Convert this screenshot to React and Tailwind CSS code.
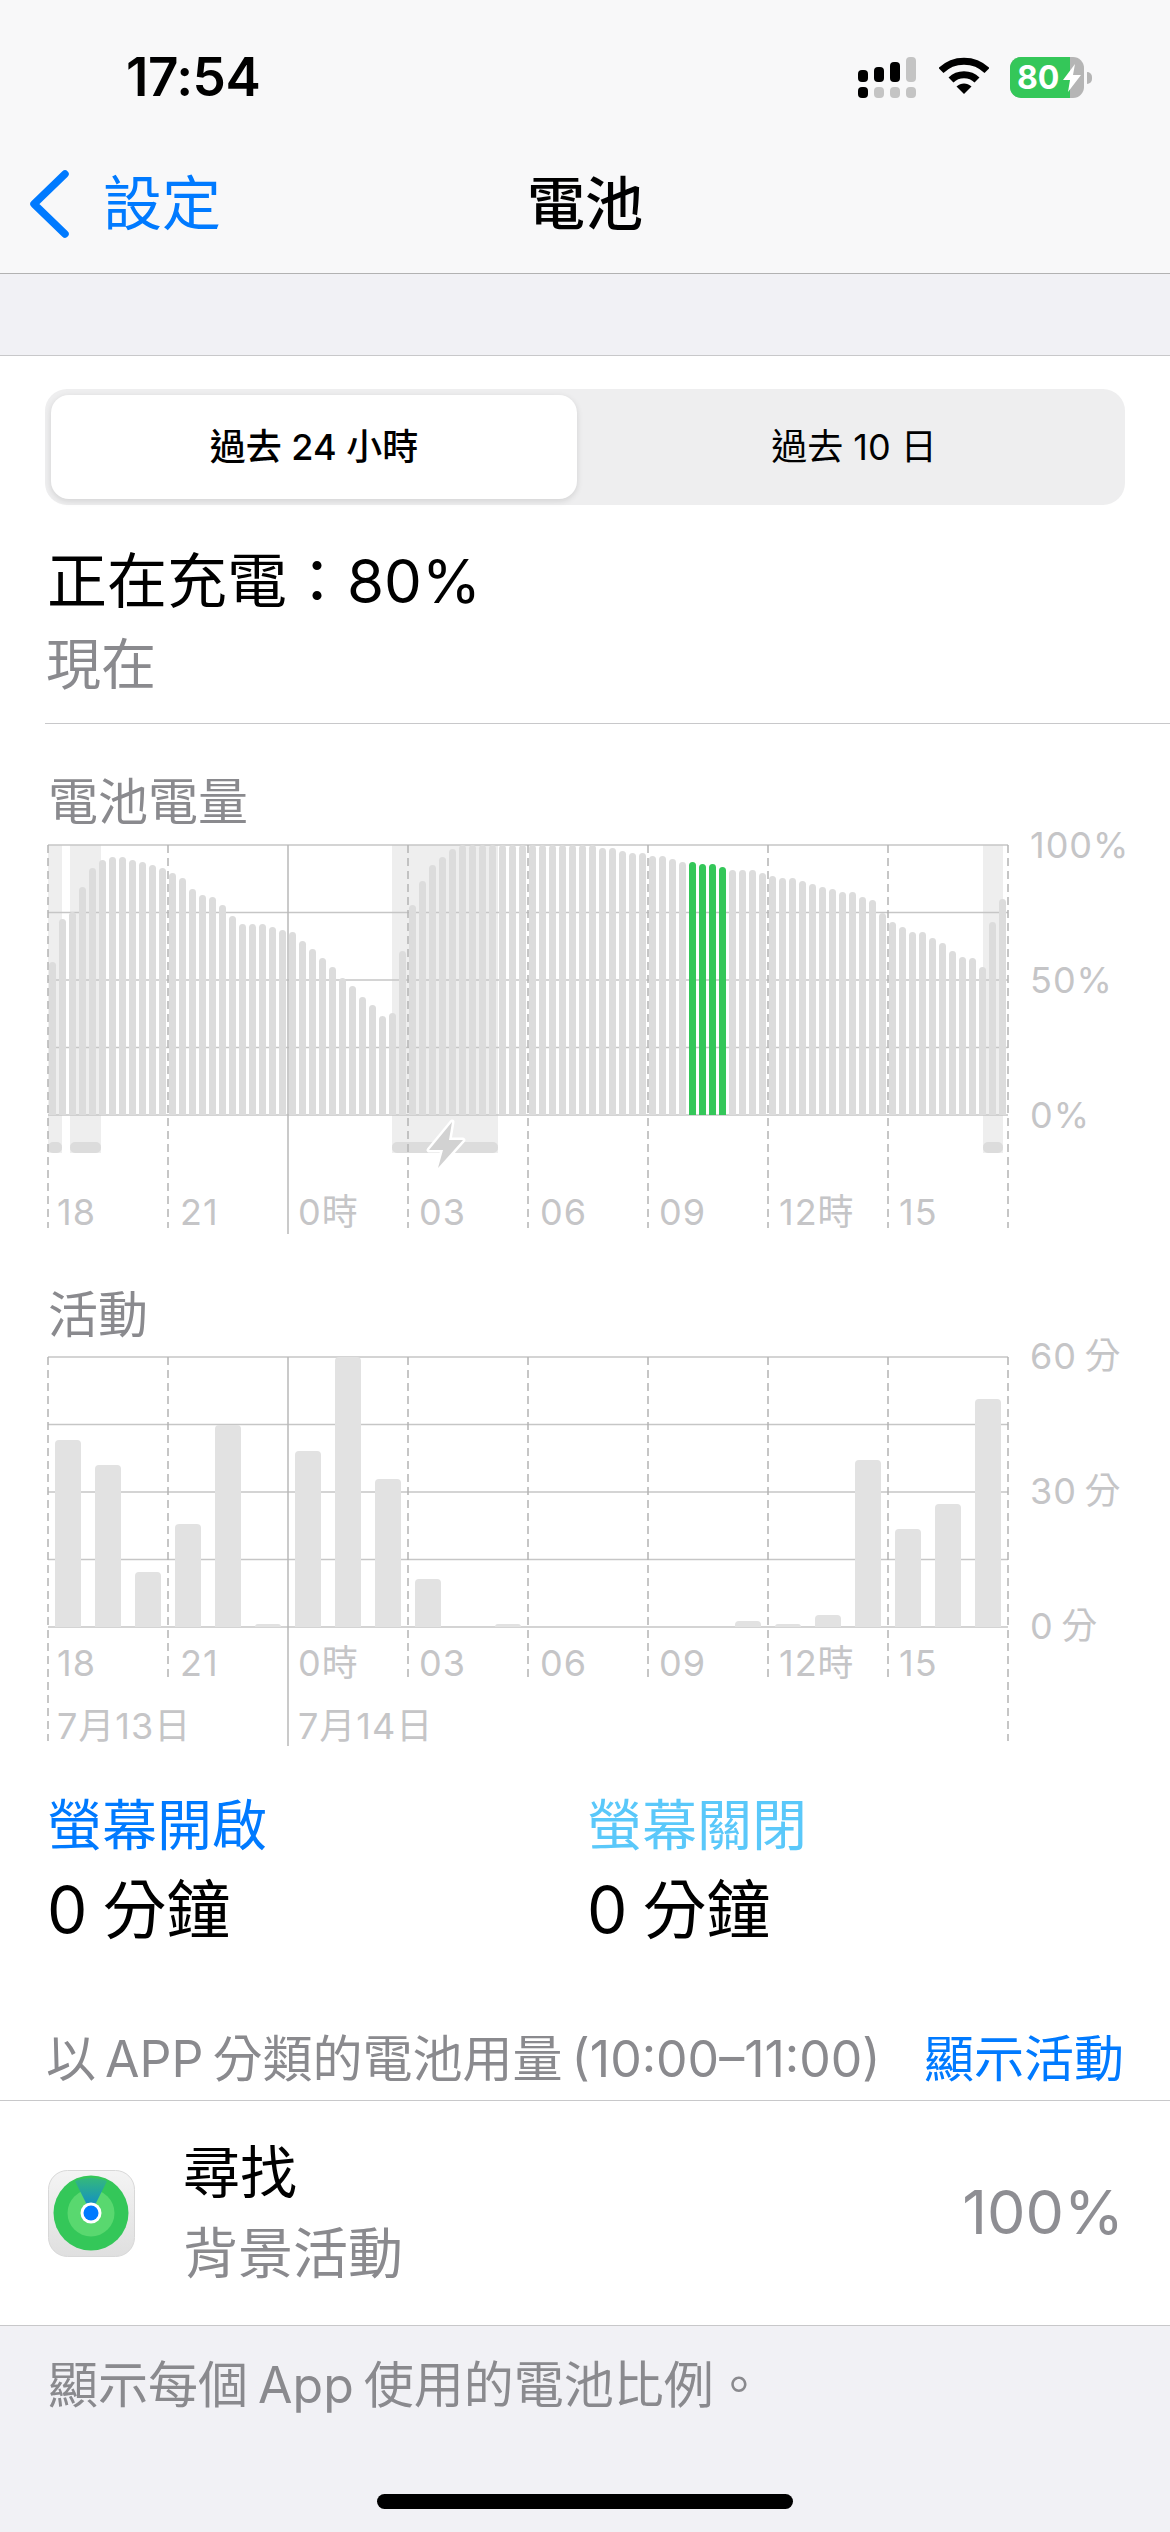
const batteryLevels = [
  153, 196, 203, 228, 247, 255, 258, 258, 255, 253, 250, 247, 242, 237, 226, 220, 218, 210, 199, 191,
  191, 191, 188, 185, 183, 174, 166, 157, 148, 137, 129, 118, 110, 99, 102, 164, 210, 234, 250, 258,
  266, 270, 270, 270, 270, 270, 270, 270, 270, 270, 270, 270, 270, 270, 270, 267, 267, 264, 262, 262,
  259, 259, 256, 253, 253, 251, 251, 248, 245, 245, 245, 242, 239, 237, 237, 234, 231, 228, 226, 223,
  223, 218, 215, 202, 193, 188, 183, 183, 177, 172, 164, 158, 157, 148, 193, 216,
];
const activity = [187, 162, 55, 103, 202, 3, 176, 270, 148, 48, 0, 3, 0, 0, 0, 0, 0, 6, 3, 12, 167, 98, 123, 228];
const chargeBands = [[48, 62], [70, 101], [392, 498], [983, 1003]];
const hourLabels = [[57, '18'], [180, '21'], [298, '0時'], [419, '03'], [540, '06'], [659, '09'], [779, '12時'], [899, '15']];
const dashedX = [168, 408, 528, 648, 768, 888];

// rounded top corners, square at the baseline
const barPath = (x, w, bottom, h, r) => {
  const top = bottom - h;
  const rr = Math.min(r, h, w / 2);
  return `M${x} ${bottom}V${top + rr}A${rr} ${rr} 0 0 1 ${x + rr} ${top}H${x + w - rr}A${rr} ${rr} 0 0 1 ${x + w} ${top + rr}V${bottom}Z`;
};

const Grid = ({ top, bottom }) => {
  const step = (bottom - top) / 4;
  return [0, 1, 2, 3, 4].map((i) => (
    <line key={i} x1="48" x2="1008" y1={top + step * i} y2={top + step * i} stroke="#c6c6c6" strokeWidth="1.5" />
  ));
};

const Dashes = ({ top, end, edgeEnd, solidEnd }) => (
  <g strokeWidth="1.5">
    {dashedX.map((x) => (
      <line key={x} x1={x} x2={x} y1={top} y2={end} stroke="#b4b4b4" strokeDasharray="8 5" />
    ))}
    <line x1="48" x2="48" y1={top} y2={edgeEnd} stroke="#b4b4b4" strokeDasharray="8 5" />
    <line x1="1008" x2="1008" y1={top} y2={edgeEnd} stroke="#b4b4b4" strokeDasharray="8 5" />
    <line x1="288" x2="288" y1={top} y2={solidEnd} stroke="#b8b8b8" />
  </g>
);

const AxisText = ({ x, y, children }) => (
  <text x={x} y={y} className="fill-[#c5c5c7] text-[36px] tracking-[1px]">{children}</text>
);

const BatteryChart = () => (
  <svg width="1170" height="408" viewBox="0 0 1170 408" className="block overflow-visible">
    {chargeBands.map(([a, b]) => (
      <g key={a}>
        <rect x={a} y="13" width={b - a} height="308" fill="#eeeeee" />
        <rect x={a} y="310" width={b - a} height="11" rx="5" fill="#dcdcdc" />
      </g>
    ))}
    <Grid top={13} bottom={283} />
    {batteryLevels.map((h, i) => (
      <path
        key={i}
        d={barPath(49 + i * 10, 7, 283, h, 3.5)}
        fill={i >= 64 && i <= 67 ? '#34c759' : '#dcdcdc'}
      />
    ))}
    <Dashes top={13} end={396} edgeEnd={396} solidEnd={402} />
    <path
      d="M452 290L429 318L443 318L438 336L463 308L449 308Z"
      fill="#d2d2d2"
      stroke="#ffffff"
      strokeWidth="5"
      strokeLinejoin="round"
      paintOrder="stroke"
    />
    {hourLabels.map(([x, t]) => (
      <AxisText key={t} x={x} y={393}>{t}</AxisText>
    ))}
    <AxisText x={1030} y={26}>100%</AxisText>
    <AxisText x={1030} y={161}>50%</AxisText>
    <AxisText x={1030} y={296}>0%</AxisText>
  </svg>
);

const ActivityChart = () => (
  <svg width="1170" height="408" viewBox="0 0 1170 408" className="block overflow-visible">
    <Grid top={12} bottom={282} />
    {activity.map((h, i) =>
      h > 0 ? <path key={i} d={barPath(55 + i * 40, 26, 282, h, 4)} fill="#e2e2e2" /> : null
    )}
    <Dashes top={12} end={336} edgeEnd={396} solidEnd={401} />
    {hourLabels.map(([x, t]) => (
      <AxisText key={t} x={x} y={331}>{t}</AxisText>
    ))}
    <AxisText x={57} y={394}>7月13日</AxisText>
    <AxisText x={298} y={394}>7月14日</AxisText>
    <AxisText x={1030} y={24}>60{'\u2009'}分</AxisText>
    <AxisText x={1030} y={159}>30{'\u2009'}分</AxisText>
    <AxisText x={1030} y={294}>0{'\u2009'}分</AxisText>
  </svg>
);

const Signal = () => (
  <svg width="60" height="42" viewBox="0 0 60 42" fill="#c4c4c4" className="block">
    <rect x="0" y="13" width="10" height="12" rx="4" fill="#000" />
    <rect x="16" y="10" width="10" height="15" rx="4" fill="#000" />
    <rect x="32" y="5" width="10" height="20" rx="4" fill="#000" />
    <rect x="48" y="0" width="10" height="25" rx="4" />
    <rect x="0" y="30" width="10" height="11" rx="4" fill="#000" />
    <rect x="16" y="30" width="10" height="11" rx="4" />
    <rect x="32" y="30" width="10" height="11" rx="4" />
    <rect x="48" y="30" width="10" height="11" rx="4" />
  </svg>
);

const Wifi = () => (
  <svg width="50" height="38" viewBox="0 0 50 38" className="block">
    <path d="M2 13.5C14.5 1 35.500 1 48 13.5" fill="none" stroke="#000" strokeWidth="7" />
    <path d="M12 23C19 16 31 16 38 23" fill="none" stroke="#000" strokeWidth="7" />
    <path d="M17.500 29.500C22 25.500 28 25.500 32.500 29.500L25 37Z" fill="#000" />
  </svg>
);

const Battery = () => (
  <div className="flex items-center">
    <div className="relative flex h-[41px] w-[74px] overflow-hidden rounded-[11px] bg-[#b5b5b5]">
      <div className="h-full w-[60px] bg-[#34c759] pl-[7px] text-[32px] leading-[41px] font-bold text-white">80</div>
      <svg width="20" height="28" viewBox="0 0 20 28" className="absolute left-[52px] top-[7px]">
        <path d="M13 0L1 16H8L6 28L19 11H11Z" fill="#fff" />
      </svg>
    </div>
    <div className="ml-[3px] h-[12px] w-[5px] rounded-r-full bg-[#b5b5b5]" />
  </div>
);

const FindMyIcon = () => (
  <svg width="87" height="87" viewBox="0 0 87 87" className="block shrink-0">
    <defs>
      <linearGradient id="tile" x1="0" y1="0" x2="0" y2="1">
        <stop offset="0" stopColor="#f4f4f4" />
        <stop offset="1" stopColor="#dfdfdf" />
      </linearGradient>
      <linearGradient id="beam" x1="0" y1="0" x2="0" y2="1">
        <stop offset="0" stopColor="#34b87c" />
        <stop offset="1" stopColor="#0a84d8" />
      </linearGradient>
    </defs>
    <rect x="0.5" y="0.5" width="86" height="86" rx="19" fill="url(#tile)" stroke="#d8d8d8" />
    <circle cx="43" cy="43" r="37.500" fill="#34c759" />
    <circle cx="43" cy="43" r="23.500" fill="#59d86f" />
    <path d="M27 11C37 7 49 7 59 11L43 43Z" fill="url(#beam)" />
    <circle cx="43" cy="43" r="10.500" fill="#fff" />
    <circle cx="43" cy="43" r="7.500" fill="#007aff" />
  </svg>
);

export default function App() {
  return (
    <div className="flex h-[2532px] w-[1170px] flex-col overflow-hidden bg-white font-['Inter','Noto_Sans_CJK_TC',sans-serif] text-black">
      {/* status bar + nav */}
      <div className="h-[274px] border-b border-[#b2b2b2] bg-[#f8f8f9]">
        <div className="flex h-[155px] items-start justify-between pl-[126px] pr-[78px] pt-[50px]">
          <span className="text-[53px] leading-[54px] font-semibold tracking-[-0.5px]">17:54</span>
          <div className="flex items-start gap-[21px] pt-[7px]">
            <Signal />
            <Wifi />
            <Battery />
          </div>
        </div>
        <div className="relative flex h-[96px] items-center justify-center">
          <div className="absolute left-[29px] top-[15px] flex items-center gap-[33px]">
            <svg width="41" height="68" viewBox="0 0 41 68" className="block">
              <path d="M36 4L5 34L36 64" fill="none" stroke="#007aff" strokeWidth="7.500" strokeLinecap="round" strokeLinejoin="round" />
            </svg>
            <span className="text-[59px] leading-[68px] text-[#007aff]">設定</span>
          </div>
          <span className="pt-[2px] text-[58px] leading-[68px] font-medium">電池</span>
        </div>
      </div>
      <div className="h-[82px] border-b border-[#c8c8ca] bg-[#f1f1f5]" />

      {/* segmented control */}
      <div className="mx-[45px] mt-[33px] flex h-[116px] w-[1080px] rounded-[22px] bg-[#eeeeef] p-[6px]">
        <div className="flex w-[526px] items-center justify-center rounded-[18px] bg-white text-[36px] font-medium shadow-[0_2px_6px_rgba(0,0,0,0.12)]">
          過去 24 小時
        </div>
        <div className="flex flex-1 items-center justify-center pl-[12px] text-[36px]">過去 10 日</div>
      </div>

      <div className="ml-[47px] mt-[41px] text-[60px] leading-[70px]">正在充電：80%</div>
      <div className="ml-[46px] mt-[18px] text-[55px] leading-[60px] text-[#8a8a8e]">現在</div>
      <div className="ml-[45px] mt-[29px] h-px bg-[#c8c8ca]" />

      <div className="ml-[48px] mt-[48px] text-[50px] leading-[60px] text-[#8a8a8e]">電池電量</div>
      <BatteryChart />

      <div className="ml-[48px] mt-[45px] text-[50px] leading-[60px] text-[#8a8a8e]">活動</div>
      <ActivityChart />

      <div className="mt-[40px] flex">
        <div className="w-[587px] pl-[47px]">
          <div className="text-[55px] leading-[64px] text-[#007aff]">螢幕開啟</div>
          <div className="mt-[17px] text-[64px] leading-[72px] [word-spacing:-3px]">0 分鐘</div>
        </div>
        <div>
          <div className="text-[55px] leading-[64px] text-[#5ac8fa]">螢幕關閉</div>
          <div className="mt-[17px] text-[64px] leading-[72px] [word-spacing:-3px]">0 分鐘</div>
        </div>
      </div>

      <div className="mt-[83px] flex items-center justify-between pl-[46px] pr-[46px]">
        <span className="text-[50px] leading-[60px] text-[#8a8a8e] [word-spacing:-5px]">以 APP 分類的電池用量 (10:00–11:00)</span>
        <span className="text-[50px] leading-[60px] text-[#007aff]">顯示活動</span>
      </div>

      <div className="mt-[11px] flex h-[225px] items-center border-t border-[#c8c8ca] pl-[48px] pr-[46px]">
        <FindMyIcon />
        <div className="ml-[48px] flex-1">
          <div className="text-[57px] leading-[66px]">尋找</div>
          <div className="mt-[14px] text-[55px] leading-[66px] text-[#8a8a8e]">背景活動</div>
        </div>
        <span className="text-[61px] text-[#8e8e93]">100%</span>
      </div>

      <div className="flex flex-1 flex-col border-t border-[#c8c8ca] bg-[#f1f1f5]">
        <div className="ml-[48px] mt-[29px] text-[50px] leading-[60px] text-[#8a8a8e] [word-spacing:-4px]">顯示每個 App 使用的電池比例。</div>
        <div className="mx-auto mt-[79px] h-[15px] w-[416px] rounded-full bg-black" />
      </div>
    </div>
  );
}
